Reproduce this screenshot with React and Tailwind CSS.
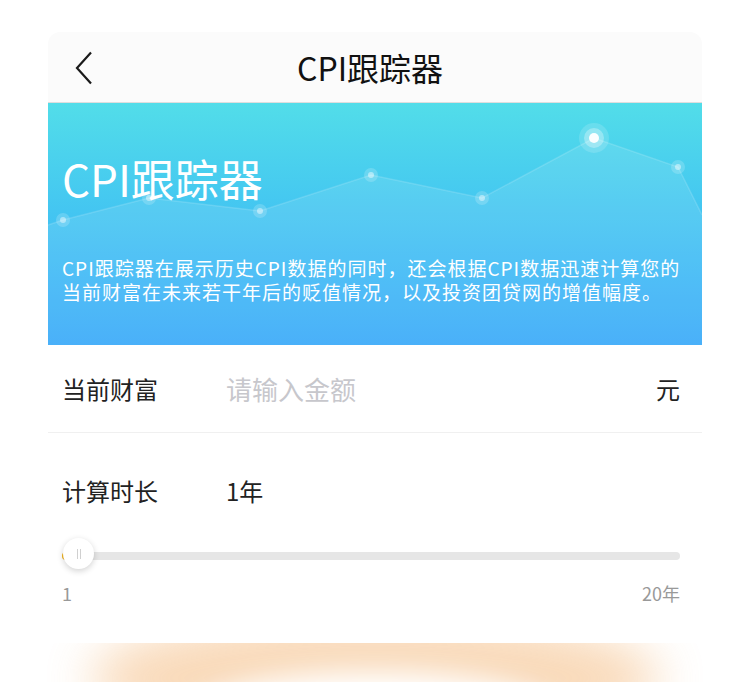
import { useState } from "react";

const font = { fontFamily: '"Noto Sans CJK SC", "Noto Sans", sans-serif' };

const points = [
  [15, 117],
  [101, 95],
  [212, 108],
  [323, 72],
  [434, 95],
  [630, 64],
];

const ChartDecor = () => {
  const line = "0,122 15,117 101,95 212,108 323,72 434,95 546,35 630,64 654,112";
  return (
    <svg
      className="absolute inset-0"
      width="654"
      height="242"
      viewBox="0 0 654 242"
    >
      <polygon
        points={`${line} 654,242 0,242`}
        fill="white"
        fillOpacity="0.1"
      />
      <polyline
        points={line}
        fill="none"
        stroke="white"
        strokeOpacity="0.15"
        strokeWidth="1.5"
      />
      {points.map(([x, y]) => (
        <g key={x}>
          <circle cx={x} cy={y} r="7" fill="white" fillOpacity="0.18" />
          <circle cx={x} cy={y} r="3" fill="white" fillOpacity="0.45" />
        </g>
      ))}
      <circle cx="546" cy="35" r="15" fill="white" fillOpacity="0.15" />
      <circle cx="546" cy="35" r="10" fill="white" fillOpacity="0.3" />
      <circle cx="546" cy="35" r="5" fill="white" fillOpacity="0.95" />
    </svg>
  );
};

const App = () => {
  const [amount, setAmount] = useState("");
  const [years] = useState(1);

  return (
    <div className="min-h-screen bg-white" style={font}>
      <div className="w-[654px] ml-[48px] pt-[32px]">
        {/* Header */}
        <div className="h-[71px] bg-[#fbfbfb] rounded-t-[12px] border-b border-[#dedede] relative flex items-center justify-center">
          <button className="absolute left-[20px] top-[18px] w-[30px] h-[36px] flex items-center justify-center">
            <svg width="20" height="34" viewBox="0 0 20 34">
              <polyline
                points="18,1.5 4,17 18,32.5"
                fill="none"
                stroke="#1a1a1a"
                strokeWidth="2.2"
              />
            </svg>
          </button>
          <h1 className="text-[32px] leading-none text-[#111] pr-[10px]">
            CPI跟踪器
          </h1>
        </div>

        {/* Banner */}
        <div className="relative h-[242px] bg-linear-to-b from-[#52dde9] to-[#36a8f9] overflow-hidden">
          <ChartDecor />
          <div className="relative pl-[14px] pr-[20px] pt-[49px] text-white">
            <h2 className="text-[44px] leading-[52px]">CPI跟踪器</h2>
            <p className="mt-[52px] text-[19px] leading-[24px] tracking-[1px]">
              CPI跟踪器在展示历史CPI数据的同时，还会根据CPI数据迅速计算您的当前财富在未来若干年后的贬值情况，以及投资团贷网的增值幅度。
            </p>
          </div>
        </div>

        {/* Amount row */}
        <div className="h-[88px] pl-[14px] pr-[22px] flex items-center border-b border-[#f0f0f0]">
          <span className="w-[164px] text-[24px] text-[#222]">当前财富</span>
          <input
            value={amount}
            onChange={(e) => setAmount(e.target.value)}
            placeholder="请输入金额"
            className="flex-1 min-w-0 text-[26px] text-[#222] placeholder-[#c7c7cc] outline-none bg-transparent"
            style={font}
          />
          <span className="text-[24px] text-[#222]">元</span>
        </div>

        {/* Duration */}
        <div className="pl-[14px] pr-[22px] pt-[42px] pb-[38px]">
          <div className="flex items-center h-[32px]">
            <span className="w-[164px] text-[24px] text-[#222]">计算时长</span>
            <span className="text-[24px] text-[#222]">{years}年</span>
          </div>

          <div className="relative h-[32px] mt-[32px] flex items-center">
            <div className="h-[8px] w-full rounded-full bg-[#e6e6e6] mt-[2px]">
              <div className="h-[8px] w-[8px] rounded-full bg-[#f5b316]" />
            </div>
            <div className="absolute left-[1px] top-[-1px] w-[31px] h-[31px] rounded-full bg-white shadow-[0_2px_6px_rgba(0,0,0,0.18)] flex items-center justify-center gap-[2px]">
              <span className="w-[1px] h-[10px] bg-[#d0d0d0]" />
              <span className="w-[1px] h-[10px] bg-[#d0d0d0]" />
            </div>
          </div>

          <div className="mt-[10px] flex justify-between text-[18px] leading-[24px] text-[#999]">
            <span>1</span>
            <span>20年</span>
          </div>
        </div>
      </div>

      {/* Orange glow of button below */}
      <div className="relative h-[39px] overflow-hidden">
        <div className="absolute left-[90px] right-[90px] top-[-30px] h-[130px] rounded-[50%] bg-[#f2ad66] opacity-45 blur-[24px]" />
        <div className="absolute left-[190px] right-[190px] top-[28px] h-[90px] rounded-[50%] bg-white blur-[14px]" />
      </div>
    </div>
  );
};

export default App;
